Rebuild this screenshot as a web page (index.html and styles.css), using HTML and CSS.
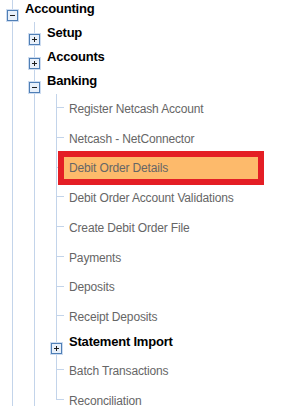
FILE: index.html
```html
<!DOCTYPE html>
<html>
<head>
<meta charset="utf-8">
<link rel="stylesheet" href="styles.css">
</head>
<body>
<ul class="lvl l0">
  <li class="node">
    <div class="row bold"><span class="tog"><svg width="9" height="9" viewBox="0 0 9 9"><path d="M2 4.5h5" stroke="#1e1e1e" stroke-width="1"/></svg></span><span class="lbl">Accounting</span></div>
    <ul class="lvl l1">
      <li class="node">
        <div class="row bold"><span class="tog"><svg width="9" height="9" viewBox="0 0 9 9"><path d="M2 4.5h5M4.5 2v5" stroke="#1e1e1e" stroke-width="1"/></svg></span><span class="lbl">Setup</span></div>
      </li>
      <li class="node">
        <div class="row bold"><span class="tog"><svg width="9" height="9" viewBox="0 0 9 9"><path d="M2 4.5h5M4.5 2v5" stroke="#1e1e1e" stroke-width="1"/></svg></span><span class="lbl">Accounts</span></div>
      </li>
      <li class="node">
        <div class="row bold"><span class="tog"><svg width="9" height="9" viewBox="0 0 9 9"><path d="M2 4.5h5" stroke="#1e1e1e" stroke-width="1"/></svg></span><span class="lbl">Banking</span></div>
        <ul class="l2">
          <li class="leaf"><span class="conn"></span><span class="lbl">Register Netcash Account</span></li>
          <li class="leaf"><span class="conn"></span><span class="lbl">Netcash - NetConnector</span></li>
          <li class="leaf"><span class="conn"></span><span class="lbl sel">Debit Order Details</span></li>
          <li class="leaf"><span class="conn"></span><span class="lbl">Debit Order Account Validations</span></li>
          <li class="leaf"><span class="conn"></span><span class="lbl">Create Debit Order File</span></li>
          <li class="leaf"><span class="conn"></span><span class="lbl">Payments</span></li>
          <li class="leaf"><span class="conn"></span><span class="lbl">Deposits</span></li>
          <li class="leaf"><span class="conn"></span><span class="lbl">Receipt Deposits</span></li>
          <li class="sub">
            <div class="row bold"><span class="tog"><svg width="9" height="9" viewBox="0 0 9 9"><path d="M2 4.5h5M4.5 2v5" stroke="#1e1e1e" stroke-width="1"/></svg></span><span class="lbl">Statement Import</span></div>
          </li>
          <li class="leaf"><span class="conn"></span><span class="lbl">Batch Transactions</span></li>
          <li class="leaf last"><span class="conn"></span><span class="lbl">Reconciliation</span></li>
        </ul>
      </li>
    </ul>
  </li>
</ul>
</body>
</html>
```

FILE: styles.css
```css
html, body {
  margin: 0;
  padding: 0;
  background: #ffffff;
  overflow: hidden;
}
body {
  font-family: "Liberation Sans", Arial, sans-serif;
}
ul {
  list-style: none;
  margin: 0;
  padding: 0;
}
.l0 {
  margin-top: -2px;
  margin-left: 12px;
  border-left: 1px solid #c3d4ea;
}
.l1 {
  margin-left: 21px;
  border-left: 1px solid #c3d4ea;
}
.l2 {
  margin-left: 21px;
}
.row {
  display: flex;
  align-items: flex-start;
  height: 24px;
}
.tog {
  box-sizing: border-box;
  width: 13px;
  height: 13px;
  margin-left: -7px;
  margin-top: 11px;
  border: 1px solid #cddcf0;
  display: flex;
  flex-shrink: 0;
}
.tog svg {
  display: block;
  background: #e8f0fa;
  border: 1px solid #4f7fb6;
  width: 9px;
  height: 9px;
}
.bold .lbl {
  margin-left: 6px;
  font-weight: bold;
  font-size: 13px;
  letter-spacing: -0.2px;
  line-height: 22px;
  color: #000000;
  white-space: nowrap;
}
.leaf {
  display: flex;
  align-items: center;
  height: 29.75px;
  border-left: 1px solid #c3d4ea;
}
.leaf.last {
  border-left: none;
}
.sub {
  border-left: 1px solid #c3d4ea;
}
.sub .tog {
  margin-top: 10px;
}
.sub .lbl {
  line-height: 20px;
}
.conn {
  align-self: flex-start;
  box-sizing: border-box;
  width: 7px;
  height: 14px;
  border-bottom: 1px solid #c3d4ea;
  flex-shrink: 0;
}
.leaf.last .conn {
  width: 8px;
  border-left: 1px solid #c3d4ea;
}
.leaf .lbl {
  margin-left: 5px;
  font-size: 12px;
  letter-spacing: -0.15px;
  color: #666666;
  white-space: nowrap;
}
.leaf .lbl.sel {
  box-sizing: border-box;
  margin-left: -6px;
  width: 206px;
  height: 34px;
  line-height: 22px;
  padding-left: 5px;
  border: 6px solid #e41e25;
  background: #fdba6b;
  color: #666666;
  flex-shrink: 0;
}
```
